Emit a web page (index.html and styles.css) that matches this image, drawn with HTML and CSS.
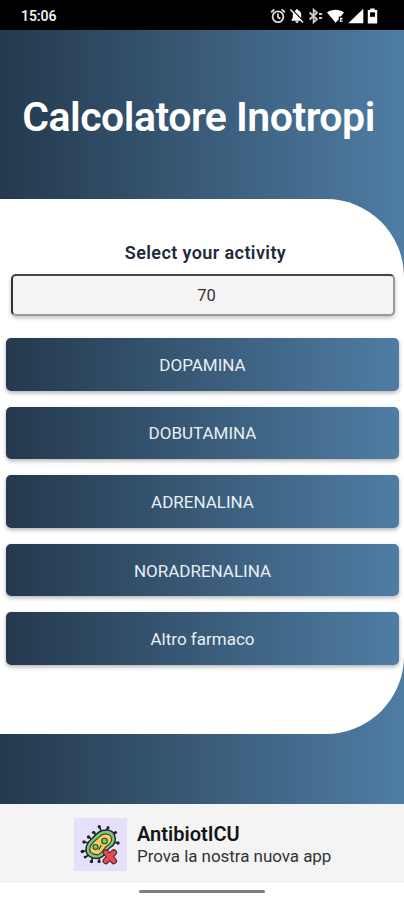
FILE: index.html
```html
<!DOCTYPE html>
<html lang="it">
<head>
    <meta charset="UTF-8">
    <meta name="viewport" content="width=device-width, initial-scale=1.0">
    <title>Calcolatore Inotropi</title>
    <link rel="stylesheet" href="styles.css">
</head>
<body>
    <!-- Status bar -->
    <div class="status-bar">
        <span class="time">15:06</span>
        <div class="status-icons">
            <svg width="16" height="16" viewBox="0 0 16 16" fill="none" stroke="#ddd" stroke-width="1.8">
                <circle cx="8" cy="8.8" r="5.4"/>
                <path d="M8 5.6v3.6l2.4 1.4M1.2 4.2l3.2-2.8M14.8 4.2l-3.2-2.8"/>
            </svg>
            <svg width="16" height="16" viewBox="0 0 16 16">
                <path d="M2.500 12.700V11.400l1.300-1.200V7c0-2.600 1.300-4.300 3.300-4.800V1.200h1.800v1c2 .5 3.300 2.200 3.300 4.800v3.200l1.300 1.200v1.300zM6.400 13.300h3.200c0 1-.7 1.600-1.600 1.600s-1.600-.6-1.600-1.600z" fill="#fff"/>
                <path d="M2.600 1.2l12 12.400" stroke="#000" stroke-width="1.400"/>
                <path d="M1.400 1.600l12.600 13" stroke="#fff" stroke-width="1.400"/>
            </svg>
            <svg width="16" height="16" viewBox="0 0 16 16" fill="none" stroke="#ccc" stroke-width="1.800">
                <path d="M1.500 4.500l7.500 6.800-3.400 3V1.700l3.400 3-7.500 6.800"/>
                <path d="M11 6h3.200M11 10h3.200" stroke-width="2.200"/>
            </svg>
            <svg width="18" height="16" viewBox="0 0 18 16" fill="#fff">
                <path d="M0 4.600C5 .8 12 .8 17 4.600L13.800 8.400h-2v2.800L8.600 14.800z"/>
                <path d="M13 9.800h2.400v1.600L14 12v.8h1.800v1H12.800v-2l1.400-.8H13z"/>
            </svg>
            <svg width="16" height="16" viewBox="0 0 16 16">
                <path d="M.3 15.300L15.300.7v14.600z" fill="#fff"/>
            </svg>
            <svg width="11" height="16" viewBox="0 0 11 16">
                <path d="M3.200.6h4.600v1.500h2.400v13.300H.8V2.100h2.400z" fill="#fff"/>
                <path d="M3 4.300h5v4.500H3z" fill="#000"/>
            </svg>
        </div>
    </div>

    <div class="app">
        <h1 class="title">Calcolatore Inotropi</h1>

        <div class="panel">
            <label class="label" for="weight">Select your activity</label>
            <input class="weight" type="text" id="weight" value="70">

            <!-- Drug buttons -->
            <div class="drugs">
                <button>DOPAMINA</button>
                <button>DOBUTAMINA</button>
                <button>ADRENALINA</button>
                <button>NORADRENALINA</button>
                <button>Altro farmaco</button>
            </div>
        </div>
    </div>

    <!-- Banner for the other app -->
    <div class="banner">
        <div class="banner-logo">
            <svg width="53" height="53" viewBox="0 0 53 53">
                <g stroke="#24222b" stroke-width="1.700" stroke-linecap="round">
                    <path d="M25.500 9l2 5M34 9l-1.500 4M15 19l3 3M20 14l2.500 4M10 24l5 1M7.500 33.500l6-1M11 39.500l4-3M17.500 43.500l1.200-4M25.500 44l-.5-5M38.500 17.500l3-3M39 24l5 1"/>
                </g>
                <g fill="#24222b">
                    <circle cx="25.300" cy="8.800" r="1.700"/>
                    <circle cx="34" cy="9.800" r="1.500"/>
                    <circle cx="14.500" cy="19" r="1.700"/>
                    <circle cx="19.500" cy="14.500" r="1.600"/>
                    <circle cx="10" cy="24" r="1.700"/>
                    <circle cx="8.500" cy="33.500" r="1.800"/>
                    <circle cx="11" cy="39" r="1.300"/>
                    <circle cx="17.500" cy="43.500" r="1.700"/>
                    <circle cx="25" cy="43.500" r="1.600"/>
                    <circle cx="41.500" cy="14.500" r="1.600"/>
                    <circle cx="44" cy="25" r="1.700"/>
                </g>
                <path d="M22 16.500C28 10.500 38 10.500 40.500 17c2.500 6.500-1 11-5.500 13.500-3 2-3.500 7.500-8.500 9.200-6.500 2.300-14.500-1.200-14.500-8.200 0-7 5-10 10-15z" fill="#79c67d" stroke="#24222b" stroke-width="1.400"/>
                <path d="M25 19.200c4-4.500 10.500-4.200 12.300.3 1.500 4-1.800 7-5.300 9.300-3 2-3.200 6-6.800 7.400-4.200 1.400-9.500-.7-9.500-4.900 0-5.500 5.300-8.100 9.300-12.100z" fill="#f5cf58" stroke="#33432f" stroke-width="1.100"/>
                <circle cx="30.500" cy="23" r="2.800" fill="#79c67d" stroke="#33432f" stroke-width="1.100"/>
                <circle cx="21.500" cy="29" r="2.500" fill="#79c67d" stroke="#33432f" stroke-width="1.100"/>
                <path d="M27 27.500l-2 4" stroke="#33432f" stroke-width="1.300" stroke-linecap="round"/>
                <path d="M31.800 34.500l8 8.500M39.800 34.500l-8 8.500" stroke="#4b2630" stroke-width="6.400" stroke-linecap="round"/>
                <path d="M31.800 34.500l8 8.500M39.800 34.500l-8 8.500" stroke="#e34a50" stroke-width="4.400" stroke-linecap="round"/>
            </svg>
        </div>
        <div class="banner-text">
            <div class="banner-title">AntibiotICU</div>
            <div class="banner-subtitle">Prova la nostra nuova app</div>
        </div>
    </div>

    <div class="nav-bar">
        <div class="nav-handle"></div>
    </div>
</body>
</html>
```
FILE: styles.css
```css
* {
    box-sizing: border-box;
}

body {
    margin: 0;
    height: 900px;
    display: flex;
    flex-direction: column;
    font-family: Roboto, sans-serif;
    background-color: #fff;
    overflow: hidden;
}

/* Status bar */
.status-bar {
    height: 30px;
    padding: 2px 26px 0 21px;
    display: flex;
    justify-content: space-between;
    align-items: center;
    background-color: #000;
    color: #eee;
}

.time {
    font-size: 14px;
    font-weight: 600;
    line-height: 16px;
    letter-spacing: -0.1px;
}

.status-icons {
    display: flex;
    align-items: center;
    gap: 3px;
}

/* Main area */
.app {
    height: 774px;
    padding-top: 61px;
    background: linear-gradient(to right, #24394d, #4f7da4);
}

.title {
    height: 108px;
    margin: 0;
    padding-right: 7px;
    font-size: 41px;
    font-weight: 600;
    line-height: 53px;
    letter-spacing: -0.5px;
    text-align: center;
    white-space: nowrap;
    color: #fff;
}

.panel {
    height: 535px;
    padding: 42px 5px 0 6px;
    display: flex;
    flex-direction: column;
    align-items: center;
    background-color: #fff;
    border-radius: 0 78px 78px 0;
}

.label {
    padding-left: 6px;
    font-size: 18px;
    font-weight: 600;
    line-height: 24px;
    letter-spacing: 0.4px;
    color: #202a3a;
}

.weight {
    width: 384px;
    height: 42px;
    margin-top: 9px;
    padding: 0 0 0 8px;
    font-family: inherit;
    font-size: 16.5px;
    text-align: center;
    color: #333;
    background-color: #f4f4f4;
    border: 2px solid;
    border-color: #444 #999 #999 #333;
    border-radius: 5px;
    box-shadow: 0 2px 4px rgba(0, 0, 0, 0.25);
}

.drugs {
    width: 100%;
    margin-top: 22px;
    display: flex;
    flex-direction: column;
    gap: 16px;
}

.drugs button {
    height: 52.6px;
    padding: 1px 0 0;
    font-family: inherit;
    font-size: 17px;
    color: #e8eef5;
    background: linear-gradient(to right, #24394d, #4f7da4);
    border: none;
    border-radius: 5px;
    box-shadow: 0 2px 4px rgba(0, 0, 0, 0.3);
}

/* Banner */
.banner {
    height: 79px;
    padding: 2px 0 0 74px;
    display: flex;
    align-items: center;
    gap: 10px;
    background-color: #f4f4f4;
}

.banner-logo {
    width: 53px;
    height: 53px;
    background-color: #e6e0fa;
}

.banner-title {
    font-size: 20px;
    font-weight: 600;
    line-height: 23px;
    color: #151515;
}

.banner-subtitle {
    font-size: 17px;
    line-height: 21px;
    letter-spacing: -0.05px;
    color: #333;
}

/* Bottom navigation */
.nav-bar {
    height: 17px;
    padding-top: 7px;
    background-color: #fff;
}

.nav-handle {
    width: 126px;
    height: 3px;
    margin: 0 auto;
    background-color: #808080;
    border-radius: 2px;
}
```
